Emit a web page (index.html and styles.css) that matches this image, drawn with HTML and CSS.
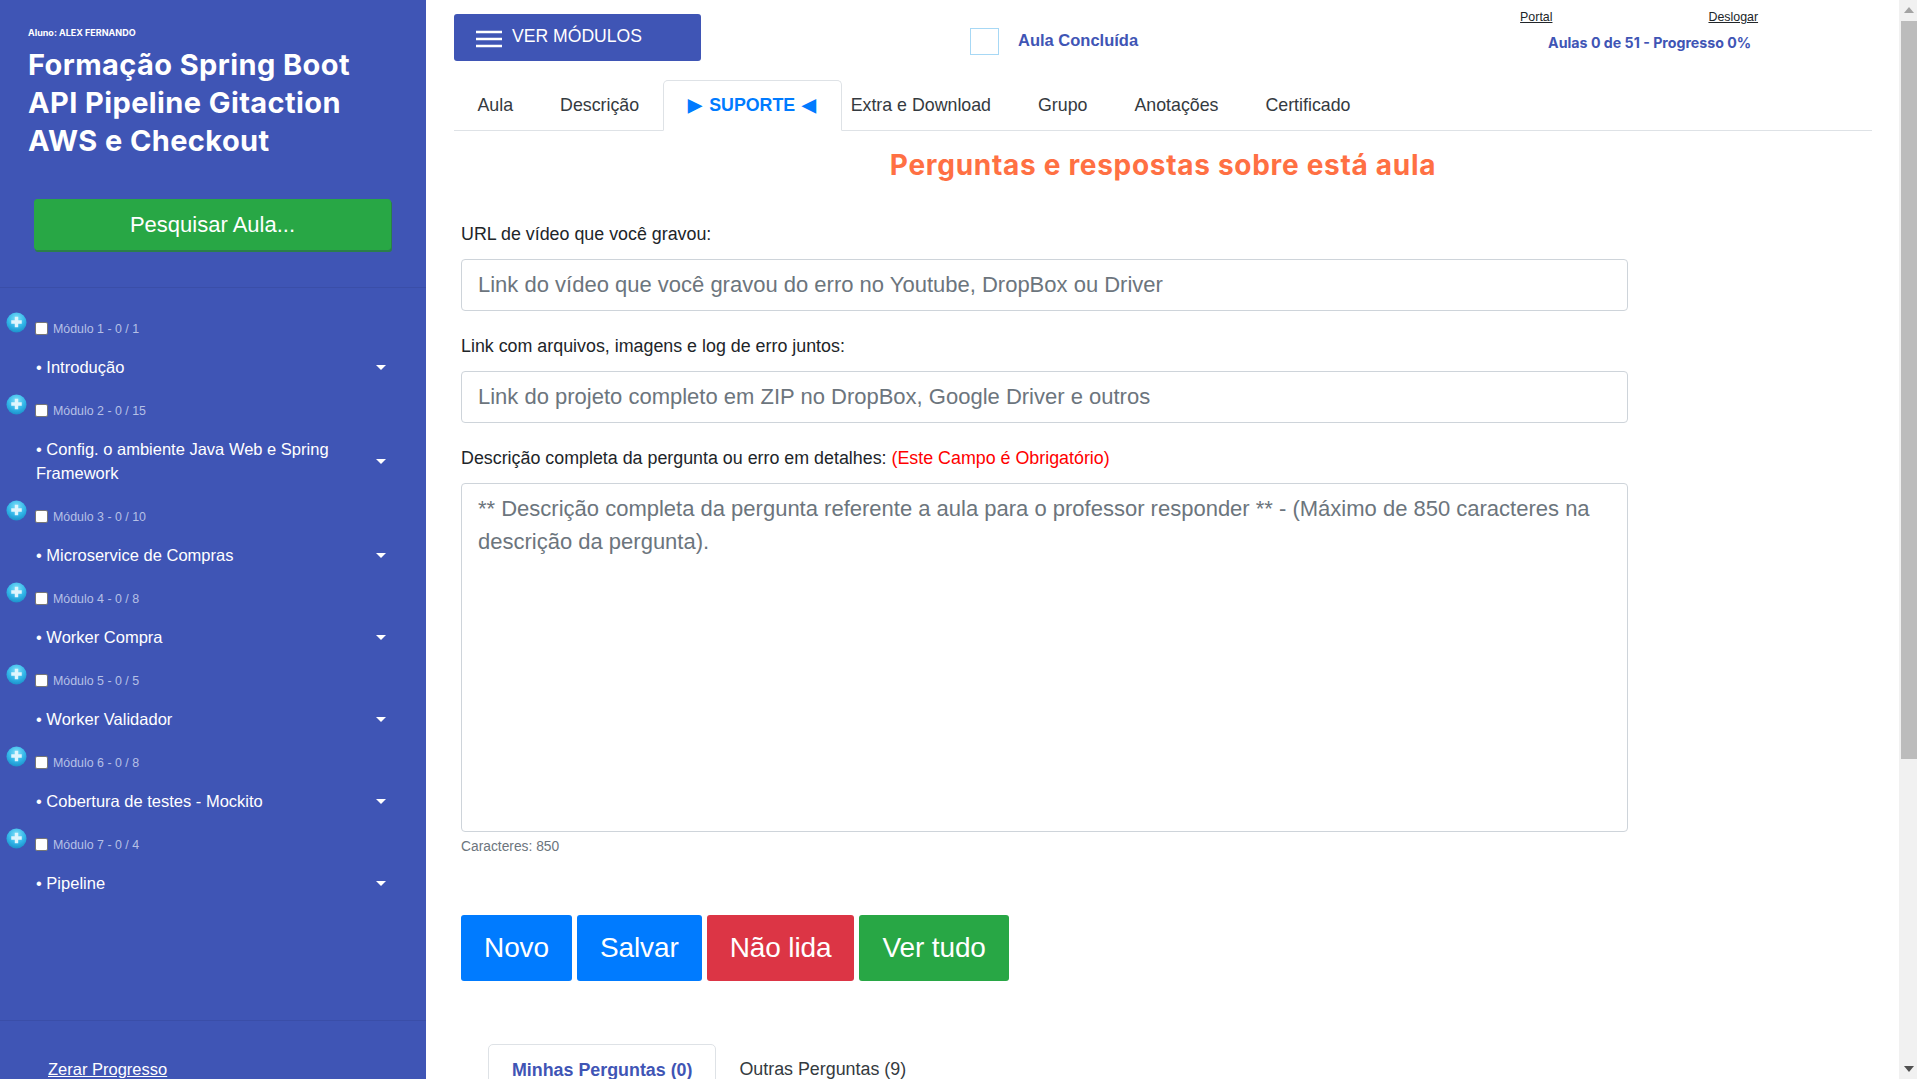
FILE: index.html
```html
<!DOCTYPE html>
<html lang="pt-BR">
<head>
<meta charset="utf-8">
<title>Formação Spring Boot</title>
<link rel="stylesheet" href="styles.css">
</head>
<body>
<div class="page">
  <aside class="sidebar">
    <header class="side-head">
      <p class="student">Aluno: ALEX FERNANDO</p>
      <h1 class="course">Formação Spring Boot<br>API Pipeline Gitaction<br>AWS e Checkout</h1>
      <button class="search-btn" type="button">Pesquisar Aula...</button>
    </header>
    <nav class="modules">
      <section class="module">
        <div class="mod-head"><svg class="plus" viewBox="0 0 22 22"><use href="#plus"/></svg><input type="checkbox"><span>Módulo 1 - 0 / 1</span></div>
        <a class="mod-item"><span>• Introdução</span><i class="caret"></i></a>
      </section>
      <section class="module">
        <div class="mod-head"><svg class="plus" viewBox="0 0 22 22"><use href="#plus"/></svg><input type="checkbox"><span>Módulo 2 - 0 / 15</span></div>
        <a class="mod-item"><span>• Config. o ambiente Java Web e Spring Framework</span><i class="caret"></i></a>
      </section>
      <section class="module">
        <div class="mod-head"><svg class="plus" viewBox="0 0 22 22"><use href="#plus"/></svg><input type="checkbox"><span>Módulo 3 - 0 / 10</span></div>
        <a class="mod-item"><span>• Microservice de Compras</span><i class="caret"></i></a>
      </section>
      <section class="module">
        <div class="mod-head"><svg class="plus" viewBox="0 0 22 22"><use href="#plus"/></svg><input type="checkbox"><span>Módulo 4 - 0 / 8</span></div>
        <a class="mod-item"><span>• Worker Compra</span><i class="caret"></i></a>
      </section>
      <section class="module">
        <div class="mod-head"><svg class="plus" viewBox="0 0 22 22"><use href="#plus"/></svg><input type="checkbox"><span>Módulo 5 - 0 / 5</span></div>
        <a class="mod-item"><span>• Worker Validador</span><i class="caret"></i></a>
      </section>
      <section class="module">
        <div class="mod-head"><svg class="plus" viewBox="0 0 22 22"><use href="#plus"/></svg><input type="checkbox"><span>Módulo 6 - 0 / 8</span></div>
        <a class="mod-item"><span>• Cobertura de testes - Mockito</span><i class="caret"></i></a>
      </section>
      <section class="module">
        <div class="mod-head"><svg class="plus" viewBox="0 0 22 22"><use href="#plus"/></svg><input type="checkbox"><span>Módulo 7 - 0 / 4</span></div>
        <a class="mod-item"><span>• Pipeline</span><i class="caret"></i></a>
      </section>
    </nav>
    <footer class="side-foot"><a href="#">Zerar Progresso</a></footer>
  </aside>

  <main class="main">
    <div class="topbar">
      <button class="menu-btn" type="button">
        <svg class="burger" viewBox="0 0 26 18"><path d="M0 2h26M0 9h26M0 16h26"/></svg>
        <span>VER MÓDULOS</span>
      </button>
      <label class="done"><span class="done-box"></span><span>Aula Concluída</span></label>
      <div class="progress">
        <div class="links"><a href="#">Portal</a><a href="#">Deslogar</a></div>
        <p class="progress-text">Aulas 0 de 51 - Progresso 0%</p>
      </div>
    </div>

    <ul class="tabs">
      <li class="tab">Aula</li>
      <li class="tab">Descrição</li>
      <li class="tab tab-active">▶ SUPORTE ◀</li>
      <li class="tab tab-after">Extra e Download</li>
      <li class="tab">Grupo</li>
      <li class="tab">Anotações</li>
      <li class="tab">Certificado</li>
    </ul>

    <h2 class="title">Perguntas e respostas sobre está aula</h2>

    <form class="form">
      <label class="field-label">URL de vídeo que você gravou:</label>
      <input class="control" type="text" placeholder="Link do vídeo que você gravou do erro no Youtube, DropBox ou Driver">
      <label class="field-label">Link com arquivos, imagens e log de erro juntos:</label>
      <input class="control" type="text" placeholder="Link do projeto completo em ZIP no DropBox, Google Driver e outros">
      <label class="field-label">Descrição completa da pergunta ou erro em detalhes: <span class="required">(Este Campo é Obrigatório)</span></label>
      <textarea class="control area" placeholder="** Descrição completa da pergunta referente a aula para o professor responder ** - (Máximo de 850 caracteres na descrição da pergunta)."></textarea>
      <small class="count">Caracteres: 850</small>
      <div class="actions">
        <button class="btn btn-blue" type="button">Novo</button>
        <button class="btn btn-blue" type="button">Salvar</button>
        <button class="btn btn-red" type="button">Não lida</button>
        <button class="btn btn-green" type="button">Ver tudo</button>
      </div>
    </form>

    <ul class="subtabs">
      <li class="subtab subtab-active">Minhas Perguntas (0)</li>
      <li class="subtab">Outras Perguntas (9)</li>
    </ul>
  </main>

  <div class="scrollbar">
    <svg class="arrow" viewBox="0 0 10 6"><path d="M5 0l5 6H0z"/></svg>
    <div class="thumb"></div>
    <svg class="arrow arrow-down" viewBox="0 0 10 6"><path d="M0 0h10L5 6z"/></svg>
  </div>
</div>

<svg class="defs" width="0" height="0">
  <defs>
    <radialGradient id="ball" cx="50%" cy="30%" r="72%">
      <stop offset="0" stop-color="#7fe0f9"/>
      <stop offset="0.6" stop-color="#31b5e8"/>
      <stop offset="1" stop-color="#1a8fc8"/>
    </radialGradient>
    <symbol id="plus" viewBox="0 0 22 22">
      <circle cx="11" cy="11" r="10.500" fill="url(#ball)"/>
      <path d="M11 5v11M5.500 10.500h11" stroke="#dff5fd" stroke-width="3.600" fill="none"/>
    </symbol>
  </defs>
</svg>
</body>
</html>
```

FILE: styles.css
```css
* { box-sizing: border-box; }
html, body { margin: 0; height: 100%; overflow: hidden; }
body { font-family: "Liberation Sans", Arial, sans-serif; color: #212529; background: #fff; font-size: 16px; }
.defs { position: absolute; }

.page { display: flex; height: 1079px; }

/* Sidebar */
.sidebar { width: 426px; flex: none; background: #3f55b5; color: #fff; display: flex; flex-direction: column; }
.side-head { height: 288px; padding: 27px 28px 0; border-bottom: 1px solid #3a4ea8; }
.student { margin: 0; font: 700 9px/12px Inter, sans-serif; }
.course { margin: 7px 0 0; font: 700 29px/38px Inter, sans-serif; letter-spacing: .4px; }
.search-btn { display: block; width: 357px; height: 51px; margin: 39px 0 0 6px; padding: 1px 0 0; border: 1px solid #28a745; border-radius: 3px; background: #28a745; color: #fff; font: 22px "Liberation Sans", sans-serif; box-shadow: 1px 2px 0 #2a7f49; }
.modules { flex: 1; padding-top: 26px; }
.mod-head { height: 30px; display: flex; align-items: center; padding-left: 35px; position: relative; font-size: 12.400px; color: #b6c0e6; }
.mod-head input { appearance: none; width: 13px; height: 13px; margin: -2px 5px 0 0; background: #fff; border: 1px solid #767676; border-radius: 2px; }
.plus { position: absolute; left: 6px; top: -2px; width: 21px; height: 21px; }
.mod-item { display: flex; align-items: center; justify-content: space-between; padding: 11px 40px 17px 36px; line-height: 24px; font-size: 16.500px; color: #fff; }
.mod-item span { max-width: 310px; }
.caret { width: 0; height: 0; flex: none; border-top: 5px solid #fff; border-left: 5px solid transparent; border-right: 5px solid transparent; }
.side-foot { height: 59px; border-top: 1px solid #3a4ea8; padding: 38px 0 0 48px; line-height: 20px; font-size: 16.500px; }
.side-foot a { color: #fff; }

/* Main */
.main { flex: 1; min-width: 0; padding: 14px 27px 0 28px; overflow: hidden; }
.topbar { display: flex; align-items: flex-start; height: 47px; }
.menu-btn { width: 247px; height: 47px; display: flex; align-items: center; gap: 10px; padding: 0 0 2px 22px; background: #3f55b5; border: 0; border-radius: 3px; color: #fff; font: 17.600px "Liberation Sans", sans-serif; }
.burger { width: 26px; height: 18px; stroke: #fff; stroke-width: 2.400; margin-top: 4px; }
.done { display: flex; align-items: center; margin: 12px 0 0 269px; color: #3f55b5; font-weight: 700; font-size: 16.500px; }
.done-box { width: 29px; height: 27px; margin-top: 2px; border: 1px solid #a7d8f5; margin-right: 19px; }
.progress { margin: -14px 0 0 382px; width: 280px; }
.links { display: flex; font-size: 12.400px; line-height: 34px; height: 34px; }
.links a { color: #212529; }
.links a + a { margin-left: 156px; }
.progress-text { margin: -1px 0 0 28px; font: 700 14.200px/20px Inter, sans-serif; color: #3f55b5; }

.tabs { display: flex; list-style: none; margin: 19px 0 0; padding: 0; height: 51px; border-bottom: 1px solid #dee2e6; }
.tab { height: 51px; padding: 0 23.500px; line-height: 50px; font-size: 17.800px; color: #343a40; white-space: nowrap; }
.tab-active { width: 179px; padding: 0; text-align: center; line-height: 48px; word-spacing: 2px; border: 1px solid #dee2e6; border-bottom-color: #fff; border-radius: 5px 5px 0 0; color: #007bff; font-weight: 700; }
.tab-after { padding-left: 9px; }

.title { margin: 18px 0 0; text-align: center; font: 700 28px/32px Inter, sans-serif; letter-spacing: .7px; color: #ff7043; width: 1418px; }

.form { width: 1167px; margin: 41px 0 0 7px; display: flex; flex-direction: column; }
.field-label { display: block; line-height: 24px; margin-bottom: 13px; font-size: 17.850px; color: #212529; }
.required { color: #f00; }
.control { display: block; width: 100%; height: 52px; margin-bottom: 23px; padding: 0 16px; border: 1px solid #ced4da; border-radius: 4px; font: 22px "Liberation Sans", sans-serif; color: #495057; }
.control::placeholder { color: #6c757d; opacity: 1; }
.area { height: 349px; margin-bottom: 0; padding: 8px 16px; line-height: 33px; resize: none; overflow: hidden; }
.count { margin-top: 5px; font-size: 13.800px; line-height: 20px; color: #6c757d; }
.actions { display: flex; gap: 5px; margin-top: 58px; }
.btn { min-width: 111px; height: 66px; padding: 0 23px; border: 0; border-radius: 3px; color: #fff; font: 28px "Liberation Sans", sans-serif; letter-spacing: -.12px; }
.btn-blue { background: #007bff; }
.btn-red { background: #dc3545; }
.btn-green { background: #28a745; }

.subtabs { display: flex; list-style: none; margin: 63px 0 0 34px; padding: 0; }
.subtab { height: 60px; padding: 12px 23px 0; line-height: 26px; font-size: 17.850px; color: #343a40; }
.subtab-active { border: 1px solid #dee2e6; border-radius: 5px 5px 0 0; color: #3f55b5; font-weight: 700; }

/* Scrollbar */
.scrollbar { width: 18px; flex: none; background: #f1f1f1; position: relative; display: flex; flex-direction: column; align-items: flex-end; }
.arrow { width: 10px; height: 6px; position: absolute; left: 5px; top: 7px; fill: #a3a3a3; }
.arrow-down { top: auto; bottom: 7px; fill: #505050; }
.thumb { width: 16px; height: 738px; margin-top: 21px; background: #bcbcbc; }
```
